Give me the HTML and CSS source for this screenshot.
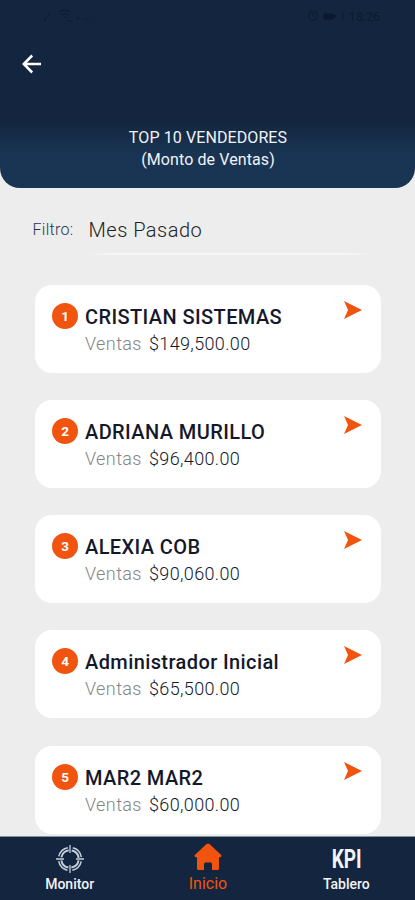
FILE: index.html
```html
<!DOCTYPE html>
<html lang="es">
<head>
<meta charset="utf-8">
<meta name="viewport" content="width=device-width, initial-scale=1">
<title>Top 10 Vendedores</title>
<link rel="stylesheet" href="styles.css">
</head>
<body>
<div class="app">
  <header class="header">
    <div class="status">
      <svg width="50" height="16" viewBox="0 0 50 16" fill="none" stroke="currentColor"><path d="M3 13v-3M5 9l3-4M17 4q6-4 12 0M19 7q4-3 8 0M21 10q2-2 4 0M26 12l3 2M36 12v-3M42 12v-2M46 12v-2"/></svg>
      <div class="status-right">
        <svg width="40" height="14" viewBox="0 0 40 14" fill="none" stroke="currentColor"><circle cx="6" cy="7" r="4.500"/><path d="M6 4v3l2 2M2 3l2-2M10 3L8 1M36 3v8"/><path d="M17 5h9l3 2-3 3h-9z" fill="currentColor"/></svg>
        <span>18:26</span>
      </div>
    </div>
    <svg class="back" width="20" height="20" viewBox="0 0 20 20"><path d="M19 10H2.500M10.200 1.500L1.800 10l8.400 8.500"/></svg>
    <h1 class="title"><span class="title-main">TOP 10 VENDEDORES</span><span class="title-sub">(Monto de Ventas)</span></h1>
  </header>

  <main class="content">
    <div class="filter"><span class="filter-label">Filtro:</span><span class="filter-value">Mes Pasado</span></div>
    <section class="list">
      <article class="card"><span class="rank">1</span><div class="info"><h2 class="name">CRISTIAN SISTEMAS</h2><p class="sales"><span class="label">Ventas</span><span class="amount">$149,500.00</span></p></div><svg class="go" width="18" height="18" viewBox="0 0 18 18"><path d="M0 0L18 9L0 18L4 9z"/></svg></article>
      <article class="card"><span class="rank">2</span><div class="info"><h2 class="name">ADRIANA MURILLO</h2><p class="sales"><span class="label">Ventas</span><span class="amount">$96,400.00</span></p></div><svg class="go" width="18" height="18" viewBox="0 0 18 18"><path d="M0 0L18 9L0 18L4 9z"/></svg></article>
      <article class="card"><span class="rank">3</span><div class="info"><h2 class="name">ALEXIA COB</h2><p class="sales"><span class="label">Ventas</span><span class="amount">$90,060.00</span></p></div><svg class="go" width="18" height="18" viewBox="0 0 18 18"><path d="M0 0L18 9L0 18L4 9z"/></svg></article>
      <article class="card"><span class="rank">4</span><div class="info"><h2 class="name">Administrador Inicial</h2><p class="sales"><span class="label">Ventas</span><span class="amount">$65,500.00</span></p></div><svg class="go" width="18" height="18" viewBox="0 0 18 18"><path d="M0 0L18 9L0 18L4 9z"/></svg></article>
      <article class="card"><span class="rank">5</span><div class="info"><h2 class="name">MAR2 MAR2</h2><p class="sales"><span class="label">Ventas</span><span class="amount">$60,000.00</span></p></div><svg class="go" width="18" height="18" viewBox="0 0 18 18"><path d="M0 0L18 9L0 18L4 9z"/></svg></article>
    </section>
  </main>

  <nav class="nav">
    <div class="tab">
      <svg class="tab-icon" width="28" height="28" viewBox="0 0 28 28" fill="none" stroke="#c5d0dc"><circle cx="14" cy="14" r="11.500" stroke-width="1.500" stroke-dasharray="13.064 5" stroke-dashoffset="-2.500"/><circle cx="14" cy="14" r="8.700" stroke-width="2" stroke-dasharray="10.666 3" stroke-dashoffset="-1.500"/><path d="M14 0v8M14 20v8M0 14h8M20 14h8" stroke-width="1.300"/></svg>
      <span class="tab-label">Monitor</span>
    </div>
    <div class="tab active">
      <svg class="tab-icon" width="28" height="28" viewBox="0 0 28 28" fill="currentColor"><path d="M12.500 1.100q1.500-1.400 3 0L26.700 11.500q1.800 2-.4 2.700H25V25.500q0 1.500-1.500 1.500H18v-6q0-1.500-1.500-1.500h-5Q10 19.500 10 21v6H4.500Q3 27 3 25.500V14.200H1.700q-2.200-.7-.4-2.700z"/></svg>
      <span class="tab-label">Inicio</span>
    </div>
    <div class="tab">
      <span class="kpi"><span class="kpi-text">KPI</span></span>
      <span class="tab-label">Tablero</span>
    </div>
  </nav>
</div>
</body>
</html>
```

FILE: styles.css
```css
* { box-sizing: border-box; }
body { margin: 0; font-family: Roboto, "Liberation Sans", sans-serif; background: #ededed; }
.app { width: 415px; height: 900px; display: flex; flex-direction: column; overflow: hidden; }
.header {
  height: 188px; flex: none; display: flex; flex-direction: column;
  border-radius: 0 0 20px 20px;
  background: linear-gradient(#13253f 0 120px, #183452 152px, #193553);
  color: #f2f3f5;
}
.status { height: 32px; padding: 8px 35px 0 42px; display: flex; justify-content: space-between; color: #0b1a2d; }
.status-right { display: flex; gap: 2px; height: 16px; align-items: center; font-size: 12.500px; }
.back { margin: 22px 0 0 22px; flex: none; fill: none; stroke: #fff; stroke-width: 2.500; }
.title { margin: 53px 0 0; padding-left: 1px; display: flex; flex-direction: column; align-items: center; font-size: 16px; line-height: 22px; font-weight: 400; letter-spacing: .1px; }
.content { flex: 1; min-height: 0; overflow: hidden; padding: 24px 34px 0 35px; }
.filter { height: 72.600px; display: flex; align-items: flex-start; }
.filter-label { width: 56px; margin-left: -2.500px; font-size: 16px; line-height: 35px; font-weight: 300; letter-spacing: .3px; color: #27354a; }
.filter-value { width: 281px; height: 43px; font-size: 20px; line-height: 36px; font-weight: 300; letter-spacing: .5px; color: #222; border-bottom: 2px solid; border-image: linear-gradient(90deg, #ededed, #f6f6f6 8%, #f6f6f6 92%, #ededed) 1; }
.list { display: flex; flex-direction: column; gap: 27.300px; }
.card { height: 88px; flex: none; padding: 18px 19.500px 0 17px; display: flex; background: #fff; border-radius: 17px; }
.rank { width: 26px; height: 26px; border-radius: 50%; flex: none; display: flex; align-items: center; justify-content: center; background: #f0540f; color: #fff; font-size: 13.500px; font-weight: 700; }
.info { flex: 1; margin-left: 7px; }
.name { margin: 0; font-size: 20px; line-height: 28px; font-weight: 500; letter-spacing: .4px; color: #15182b; white-space: nowrap; }
.sales { margin: 0; display: flex; font-size: 18px; line-height: 25px; font-weight: 300; }
.label { width: 64px; letter-spacing: .4px; color: #858585; }
.amount { letter-spacing: .35px; color: #15182b; }
.go { margin-top: -2px; fill: #f0540f; flex: none; }
.nav { height: 64px; flex: none; display: grid; grid-template-columns: repeat(3, 138.333px); background: #13253f; border-top: 1px solid #8490a0; color: #f2f3f5; }
.tab { display: flex; flex-direction: column; align-items: center; padding: 8px 0 0 1px; }
.active { color: #f0540f; padding-top: 6px; }
.tab-icon { flex: none; }
.tab-label { margin-top: 2px; font-size: 14px; line-height: 19px; font-weight: 500; }
.active .tab-label { font-size: 16px; font-weight: 400; margin-top: 3px; }
.kpi { height: 28px; display: flex; align-items: center; justify-content: center; font-size: 25px; font-weight: 700; }
.kpi-text { transform: scaleX(.76); }
```
